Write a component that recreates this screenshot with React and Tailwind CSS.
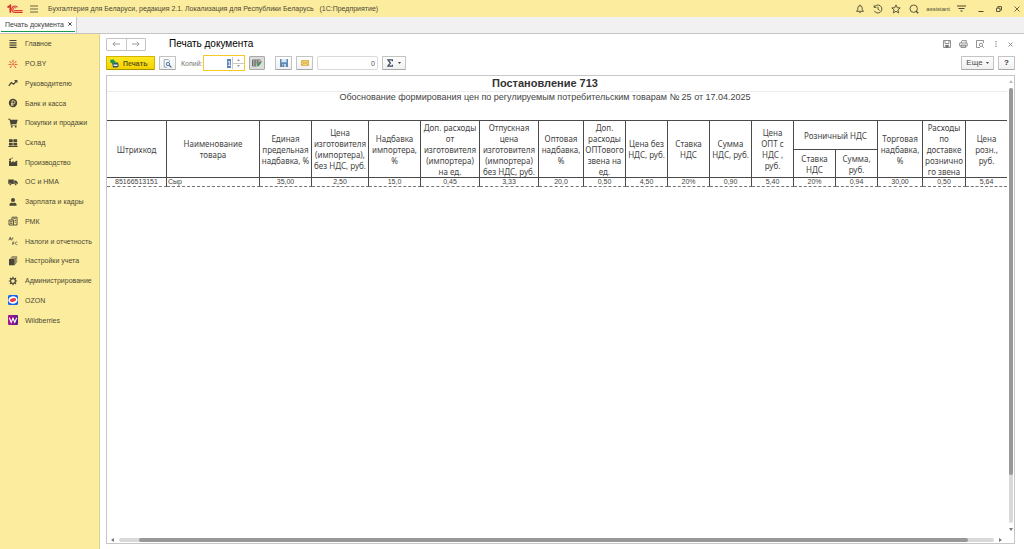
import { useState } from "react";

const GlyphHome = () => (
  <svg viewBox="0 0 10 10" className="size-[10px]" stroke="#4a4637" strokeWidth="1.2">
    <path d="M1.500 1.500h7M1.500 3.800h7M1.500 6.100h7M1.500 8.400h7" />
  </svg>
);

const GlyphPoBy = () => (
  <svg viewBox="0 0 10 10" className="size-[10px]" stroke="#e8502f" fill="none">
    <path d="M5 3.4V.8M3.6 4.2 1.6 2M6.4 4.2 8.4 2M3.3 5.4H.6M6.7 5.4h2.7M3.8 6.5 2 9M6.2 6.5 8 9" />
    <circle cx="5" cy="5.2" r=".9" fill="#e8502f" stroke="none" />
  </svg>
);

const GlyphTrend = () => (
  <svg viewBox="0 0 10 10" className="size-[10px]" stroke="#4a4637" fill="none" strokeWidth="1.3">
    <path d="M.8 7.8 3.3 4.6 5.6 6.2 8.6 2.8" />
    <path d="M6 2h3.4v3.2z" fill="#4a4637" stroke="none" />
  </svg>
);

const GlyphCoin = () => (
  <svg viewBox="0 0 10 10" className="size-[10px]" fill="none">
    <circle cx="5" cy="5" r="4.2" fill="#4a4637" />
    <path d="M4 8V2.8h1.6a1.4 1.4 0 0 1 0 2.9H3M3 7h2.6" stroke="#fbec9e" strokeWidth=".8" />
  </svg>
);

const GlyphCart = () => (
  <svg viewBox="0 0 10 10" className="size-[10px]" fill="#4a4637">
    <path d="M.3.8h1.8l.4 1h7.2L8.5 6H3.6l.1.7h5v.9H2.8L1.6 1.7H.3z" />
    <circle cx="3.8" cy="8.7" r=".9" />
    <circle cx="7.7" cy="8.7" r=".9" />
  </svg>
);

const GlyphStock = () => (
  <svg viewBox="0 0 10 10" className="size-[10px]" fill="#4a4637">
    <path d="M1 1.2h3.7v3H1zM5.4 1.2h3.7v3H5.4zM1 4.9h3.7v2.6H1zM5.4 4.9h3.7v2.6H5.4zM.4 8h9.2v.9H.4z" />
  </svg>
);

const GlyphFactory = () => (
  <svg viewBox="0 0 10 10" className="size-[10px]" fill="#4a4637">
    <path d="M1 9V3.600h2V5.600L5.600 4v1.600l3.600-2V9z" />
    <path d="M1.100 3V2h1.800v1zM1.600 1.500C2.200.5 3 1.400 3.800.7h1.400c-.5 1-1.200.9-2 .9z" />
  </svg>
);

const GlyphTruck = () => (
  <svg viewBox="0 0 10 10" className="size-[10px]" fill="#4a4637">
    <path d="M.3 2.5h5.5v4.6H.3zM6.2 3.5H8l1.7 1.8v1.8H6.2z" />
    <circle cx="2.3" cy="7.3" r="1.1" stroke="#fbec9e" strokeWidth=".4" />
    <circle cx="7.7" cy="7.3" r="1.1" stroke="#fbec9e" strokeWidth=".4" />
  </svg>
);

const GlyphPerson = () => (
  <svg viewBox="0 0 10 10" className="size-[10px]" fill="#4a4637">
    <circle cx="5" cy="3" r="2" />
    <path d="M1.500 8.800V7.300c0-1 1.300-1.500 2.500-1.800L5 6.400l1-.9c1.200.3 2.500.8 2.500 1.800v1.500z" />
  </svg>
);

const GlyphRmk = () => (
  <svg viewBox="0 0 10 10" className="size-[10px]" stroke="#4a4637" fill="none" strokeWidth=".9">
    <path d="M1 4h4.500v5H1zM4 4V1.200h5V9H5.500" />
    <path d="M2 5.700h2.500M2 7.300h2.500M6.700 4.500h1.200M6.700 6.200h1.200M5.300 2.700h2.500" />
  </svg>
);

const GlyphTax = () => (
  <svg viewBox="0 0 10 10" className="size-[10px]" stroke="#6b6550" fill="none" strokeWidth=".9">
    <path d="M.8 4.300 2.300 1l.9 3.300M1.400 3.200h1.700M4 4.300V2h1.500M9.300 6.200a1.300 1.300 0 1 0 0 2.200M4.800 9V6h1.500M4.800 7.500h1.300" />
  </svg>
);

const GlyphSettings = () => (
  <svg viewBox="0 0 10 10" className="size-[10px]" fill="#4a4637">
    <path d="M1 3h5.700v6.300H1z" />
    <path d="M2 2.400h5.300v6l.6-.5V1.700H2.600zM3.300 1.200h5.200v6l.6-.5V.6H3.800z" />
  </svg>
);

const GlyphGear = () => (
  <svg viewBox="0 0 10 10" className="size-[10px]" stroke="#4a4637" fill="none">
    <circle cx="5" cy="5" r="2.400" strokeWidth="1.200" />
    <path
      d="M5 .8v1.500M5 7.700v1.500M.8 5h1.500M7.700 5h1.500M2 2l1.100 1.100M6.900 6.900 8 8M8 2 6.900 3.100M3.100 6.900 2 8"
      strokeWidth="1.200"
    />
  </svg>
);

const GlyphOzon = () => (
  <svg viewBox="0 0 10 10" className="size-[10px]">
    <rect width="10" height="10" rx="1.500" fill="#1663f0" />
    <ellipse cx="5" cy="5" rx="4.600" ry="3.700" fill="#fff" transform="rotate(-8 5 5)" />
    <ellipse cx="5" cy="5" rx="3.100" ry="1.900" fill="#ee3a43" transform="rotate(-12 5 5)" />
  </svg>
);

const GlyphWb = () => (
  <svg viewBox="0 0 10 10" className="size-[10px]">
    <defs>
      <linearGradient id="wb" x1="0" x2="1">
        <stop offset="0" stopColor="#b01595" />
        <stop offset="1" stopColor="#5a1a8c" />
      </linearGradient>
    </defs>
    <rect width="10" height="10" rx="1" fill="url(#wb)" />
    <path d="M1.300 2.800 3.200 7.400 5 3.200 6.800 7.400 8.700 2.800" stroke="#fff" fill="none" strokeWidth="1.100" />
  </svg>
);

const sections = [
  { name: "Главное", Icon: GlyphHome },
  { name: "PO.BY", Icon: GlyphPoBy },
  { name: "Руководителю", Icon: GlyphTrend },
  { name: "Банк и касса", Icon: GlyphCoin },
  { name: "Покупки и продажи", Icon: GlyphCart },
  { name: "Склад", Icon: GlyphStock },
  { name: "Производство", Icon: GlyphFactory },
  { name: "ОС и НМА", Icon: GlyphTruck },
  { name: "Зарплата и кадры", Icon: GlyphPerson },
  { name: "РМК", Icon: GlyphRmk },
  { name: "Налоги и отчетность", Icon: GlyphTax },
  { name: "Настройки учета", Icon: GlyphSettings },
  { name: "Администрирование", Icon: GlyphGear },
  { name: "OZON", Icon: GlyphOzon },
  { name: "Wildberries", Icon: GlyphWb },
];

const columns = [
  { lines: ["Штрихкод"], width: 60, value: "85166513151" },
  { lines: ["Наименование", "товара"], width: 93, value: "Сыр" },
  { lines: ["Единая", "предельная", "надбавка, %"], width: 52, value: "35,00" },
  { lines: ["Цена", "изготовителя", "(импортера),", "без НДС, руб."], width: 57, value: "2,50" },
  { lines: ["Надбавка", "импортера,", "%"], width: 52, value: "15,0" },
  { lines: ["Доп. расходы", "от", "изготовителя", "(импортера)", "на ед."], width: 59, value: "0,45" },
  { lines: ["Отпускная", "цена", "изготовителя", "(импортера)", "без НДС, руб."], width: 59, value: "3,33" },
  { lines: ["Оптовая", "надбавка,", "%"], width: 45, value: "20,0" },
  { lines: ["Доп.", "расходы", "ОПТового", "звена на", "ед."], width: 42, value: "0,50" },
  { lines: ["Цена без", "НДС, руб."], width: 42, value: "4,50" },
  { lines: ["Ставка", "НДС"], width: 42, value: "20%" },
  { lines: ["Сумма", "НДС, руб."], width: 42, value: "0,90" },
  { lines: ["Цена", "ОПТ с", "НДС ,", "руб."], width: 42, value: "5,40" },
  { lines: ["Ставка", "НДС"], width: 42, value: "20%", group: "Розничный НДС" },
  { lines: ["Сумма,", "руб."], width: 42, value: "0,94", group: "Розничный НДС" },
  { lines: ["Торговая", "надбавка,", "%"], width: 45, value: "30,00" },
  { lines: ["Расходы", "по", "доставке", "рознично", "го звена"], width: 43, value: "0,50" },
  { lines: ["Цена", "розн.,", "руб."], width: 41, value: "5,64" },
];

const toolButton =
  "flex h-[14px] items-center justify-center rounded-[1px] border border-[#c3c3c3] border-b-[#a8a8a8] bg-linear-to-b from-white to-[#f0f0f0]";

function Lines({ lines }) {
  return lines.map((line) => (
    <span key={line} className="block whitespace-nowrap">
      {line}
    </span>
  ));
}

function TitleBar() {
  return (
    <header className="flex h-[17px] shrink-0 items-center bg-[#fbec9e] pl-[7px] pr-1 text-[#4d4833]">
      <svg viewBox="0 0 17 10" className="h-[10px] w-[17px]" fill="none" stroke="#d9312b">
        <path d="M.5 3.500 3.300 1.500v7.300" strokeWidth="1.700" />
        <path d="M10.500 3.400A3.200 3.200 0 1 0 7.800 8.400H15.600" strokeWidth="1.200" />
        <path d="M9 4.300a1.500 1.500 0 1 0-1.200 2.300h7.800" strokeWidth="1" />
      </svg>
      <button aria-label="Меню" className="ml-[6px]">
        <svg viewBox="0 0 8 8" className="size-2" stroke="#6b6446">
          <path d="M0 1h8M0 4h8M0 7h8" />
        </svg>
      </button>
      <div className="ml-[10px] flex-1 whitespace-pre text-[7px]">
        {"Бухгалтерия для Беларуси, редакция 2.1. Локализация для Республики Беларусь   (1С:Предприятие)"}
      </div>
      <div className="flex items-center gap-2">
        <button aria-label="Уведомления">
          <svg viewBox="0 0 10 10" className="size-[10px]" fill="none" stroke="#4d4833" strokeWidth=".9">
            <path d="M1.500 7.300h7L7.200 5.700V4A2.200 2.200 0 0 0 2.800 4v1.700zM5 .6v1.200M4.200 8.300a.9.9 0 0 0 1.600 0" />
          </svg>
        </button>
        <button aria-label="История">
          <svg viewBox="0 0 10 10" className="size-[10px]" fill="none" stroke="#4d4833" strokeWidth=".9">
            <path d="M1.300 3.200A4 4 0 1 1 1.300 6.800M1.200 1.200v2.200h2.200M5 2.700v2.500l1.700 1.300" />
          </svg>
        </button>
        <button aria-label="Избранное">
          <svg viewBox="0 0 10 10" className="size-[10px]" fill="none" stroke="#4d4833" strokeWidth=".9">
            <path d="m5 .9 1.200 2.800 3 .2-2.300 2 .8 3L5 7.300 2.300 8.900l.8-3-2.300-2 3-.2z" />
          </svg>
        </button>
        <button aria-label="Поиск">
          <svg viewBox="0 0 10 10" className="size-[10px]" fill="none" stroke="#4d4833" strokeWidth=".9">
            <circle cx="4.700" cy="4.700" r="3.700" />
            <path d="m6.900 6.900 2.300 2.300" strokeWidth="1.300" />
          </svg>
        </button>
        <span className="-mx-px text-[6px]">assistant</span>
        <button aria-label="Сервис">
          <svg viewBox="0 0 9 8" className="h-2 w-[9px]" stroke="#4d4833" fill="#4d4833">
            <path d="M0 1h9M1.500 3.500h6" />
            <path d="M3 5.500h3L4.500 7z" stroke="none" />
          </svg>
        </button>
      </div>
      <div className="ml-3 flex items-center gap-3">
        <button aria-label="Свернуть">
          <svg viewBox="0 0 6 6" className="size-[6px]" stroke="#4d4833">
            <path d="M.5 5.500h5" />
          </svg>
        </button>
        <button aria-label="Развернуть">
          <svg viewBox="0 0 6 6" className="size-[6px]" stroke="#4d4833" fill="none" strokeWidth=".9">
            <path d="M.5 2.200h3.500v3.300H.5zM1.800 2V.6h3.700v3.500H4.200" />
          </svg>
        </button>
        <button aria-label="Закрыть">
          <svg viewBox="0 0 6 6" className="size-[6px]" stroke="#4d4833" strokeWidth=".8">
            <path d="m.5.5 5 5M5.500.5l-5 5" />
          </svg>
        </button>
      </div>
    </header>
  );
}

function OpenTabs() {
  return (
    <div className="flex h-[17px] shrink-0 border-b border-[#c4c4c4] bg-[#f1f1f1]">
      <div className="flex h-4 items-center border-r border-[#c4c4c4] bg-white px-[1px]">
        <div className="flex h-[15px] items-center gap-1 self-start border-b border-[#169a4c] pr-[3px] pl-[4px] text-[7px] text-[#404040]">
          <a href="#document">Печать документа</a>
          <button aria-label="Закрыть вкладку">
            <svg viewBox="0 0 4 4" className="size-1" stroke="#333" strokeWidth=".9">
              <path d="m.3.3 3.400 3.400M3.700.3.300 3.700" />
            </svg>
          </button>
        </div>
      </div>
    </div>
  );
}

function Sidebar() {
  return (
    <aside className="w-[100px] shrink-0 border-r border-[#ddd08c] bg-[#fbec9e]">
      <nav className="grid h-[296px] auto-rows-fr">
        {sections.map(({ name, Icon }) => (
          <a
            key={name}
            href="#section"
            className="flex items-center gap-[7px] pl-2 text-[7px] whitespace-nowrap text-[#4d4833]"
          >
            <Icon />
            {name}
          </a>
        ))}
      </nav>
    </aside>
  );
}

function PageHeader() {
  return (
    <div className="flex h-5 items-center">
      <div className="flex h-[13px] w-10 divide-x divide-[#c9c9c9] rounded-[1px] border border-[#c3c3c3]">
        <button aria-label="Назад" className="flex flex-1 items-center justify-center">
          <svg viewBox="0 0 8 6" className="h-[6px] w-2" fill="none" stroke="#9b9b9b">
            <path d="M8 3H1M3.200.7.900 3l2.300 2.300" />
          </svg>
        </button>
        <button aria-label="Вперед" className="flex flex-1 items-center justify-center">
          <svg viewBox="0 0 8 6" className="h-[6px] w-2" fill="none" stroke="#9b9b9b">
            <path d="M0 3h7M4.800.7 7.100 3 4.800 5.300" />
          </svg>
        </button>
      </div>
      <h1 className="ml-[23px] flex-1 text-[10px] text-black">Печать документа</h1>
      <div className="flex items-center gap-2 pr-[2px] text-[#777]">
        <button aria-label="Сохранить">
          <svg viewBox="0 0 8 8" className="size-2" fill="none" stroke="#777" strokeWidth=".8">
            <path d="M.5.500h7v7h-7zM2 .5v3h4v-3M2.300 7.500V5.300h3.400v2.200" />
            <path d="M3 5.500h2v2H3z" fill="#777" />
          </svg>
        </button>
        <button aria-label="Печать">
          <svg viewBox="0 0 9 8" className="h-2 w-[9px]" fill="none" stroke="#777" strokeWidth=".8">
            <path d="M2 3 3 .6h4.500L6.800 3M.6 3h7.600v3H.6zM2 5h4.700v2.500H2z" />
          </svg>
        </button>
        <button aria-label="Просмотр">
          <svg viewBox="0 0 8 8" className="size-2" fill="none" stroke="#777" strokeWidth=".8">
            <path d="M7.500 3V.5h-7v7H4M6.300 6.300l1.500 1.500" />
            <circle cx="5" cy="4.800" r="1.700" />
          </svg>
        </button>
        <button aria-label="Еще действия" className="px-[3px]">
          <svg viewBox="0 0 2 8" className="h-2 w-[2px]" fill="#666">
            <path d="M.5 1h1v1.200h-1zM.5 3.400h1v1.200h-1zM.5 5.800h1V7h-1z" />
          </svg>
        </button>
        <button aria-label="Закрыть">
          <svg viewBox="0 0 5 5" className="size-[5px]" stroke="#777" strokeWidth=".8">
            <path d="m.5.5 4 4M4.500.5l-4 4" />
          </svg>
        </button>
      </div>
    </div>
  );
}

function Toolbar({ copies, setCopies }) {
  return (
    <div className="flex h-[18px] items-center text-[8px] text-[#4a4a4a]">
      <button className="flex h-[14px] w-[49px] items-center gap-1 rounded-[1px] border border-[#d2b400] border-b-[#a89000] bg-linear-to-b from-[#ffe822] to-[#f2d200] pl-[3px] text-[7px] font-bold text-[#6b5c10]">
        <svg viewBox="0 0 9 9" className="size-[9px]">
          <path d="M2 3.500h6l.8 3.500-1.500 1.500H3z" fill="#35546e" />
          <path d="M3.500 5.500h4V7h-4z" fill="#dceaf4" />
          <path d="M.3.800 4.200.6v1.300l1.700.7-1.700 1.300-1 1.200L.3 3.500z" fill="#179a50" />
        </svg>
        Печать
      </button>
      <button aria-label="Предварительный просмотр" className={`ml-1 w-[17px] ${toolButton}`}>
        <svg viewBox="0 0 9 9" className="size-[9px]" fill="none" stroke="#8795a3" strokeWidth=".8">
          <path d="M6.500 3V1.800L5.300.6H1.200v7.600H4" />
          <circle cx="5" cy="5" r="1.700" stroke="#2f5e91" fill="#d8e8f6" />
          <path d="m6.300 6.300 2 2" stroke="#2f5e91" strokeWidth="1.200" />
        </svg>
      </button>
      <label htmlFor="copies" className="ml-[5px] w-[22px] text-[7px] whitespace-nowrap text-[#777]">
        Копий:
      </label>
      <div className="flex h-4 w-[42px] items-center border border-[#f5c928] bg-white">
        <input
          id="copies"
          value={copies}
          onChange={(e) => setCopies(Number(e.target.value) || 0)}
          className="ml-auto h-[9px] w-1 bg-[#5c84b4] text-right text-[8px] text-white outline-none"
        />
        <div className="ml-px flex h-3 w-3 flex-col divide-y divide-[#c9c9c9] border-l border-[#c9c9c9]">
          <button aria-label="Больше" className="flex flex-1 items-center justify-center" onClick={() => setCopies(copies + 1)}>
            <svg viewBox="0 0 3 2" className="h-[2px] w-[3px]" fill="#999">
              <path d="M0 2h3L1.500 0z" />
            </svg>
          </button>
          <button aria-label="Меньше" className="flex flex-1 items-center justify-center" onClick={() => setCopies(Math.max(1, copies - 1))}>
            <svg viewBox="0 0 3 2" className="h-[2px] w-[3px]" fill="#999">
              <path d="M0 0h3L1.500 2z" />
            </svg>
          </button>
        </div>
      </div>
      <button
        aria-label="Редактирование"
        className="ml-1 flex h-[14px] w-[16px] items-center justify-center rounded-[1px] border border-[#a9a9a9] bg-[#dcdcdc]"
      >
        <svg viewBox="0 0 10 8" className="h-2 w-[10px]" fill="none" stroke="#555" strokeWidth=".8">
          <path d="M8.500 1H.5v6h4M.5 3h7M.5 5h5M3 1v6M5.700 1v4" />
          <path d="M5 7.500 5.500 5.600 8 2.500l1.300 1L6.800 7z" fill="#23924a" stroke="none" />
          <path d="m8.200 2.200.6-.7 1.200.9-.6.8z" fill="#c2513e" stroke="none" />
        </svg>
      </button>
      <button aria-label="Сохранить файл" className={`ml-[10px] w-[17px] ${toolButton}`}>
        <svg viewBox="0 0 8 8" className="size-2">
          <path d="M0 0h8v8H0z" fill="#5d89b8" />
          <path d="M1.500 0h5v3.300h-5z" fill="#dbe8f4" />
          <path d="M2 5h4v3H2z" fill="#bcd0e4" />
          <path d="M2.600 5.500h1.200V8H2.600z" fill="#3c648f" />
        </svg>
      </button>
      <button aria-label="Отправить по почте" className={`ml-1 w-[17px] ${toolButton}`}>
        <svg viewBox="0 0 8 6" className="h-[6px] w-2">
          <rect x=".4" y=".4" width="7.200" height="5.200" rx=".5" fill="#f5d472" stroke="#d3a63a" strokeWidth=".8" />
          <path d="m.6 5.300 2.600-2.600M7.400 5.300 4.800 2.700M.6.800 4 3.500 7.400.8" fill="none" stroke="#c99b2e" strokeWidth=".6" />
        </svg>
      </button>
      <input
        aria-label="Сумма выделенных ячеек"
        readOnly
        value="0"
        className="ml-[4px] h-[14px] w-[61px] rounded-[2px] border border-[#dadada] px-[2px] text-right text-[7px] text-[#555]"
      />
      <button aria-label="Вычислить" className={`ml-[4px] w-[24px] gap-[5px] ${toolButton}`}>
        <svg viewBox="0 0 6 8" className="h-2 w-[6px]" fill="none" stroke="#3d4c60" strokeWidth="1.300">
          <path d="M5.500 2.200V.8H.9L3.400 4 .9 7.200h4.600V5.800" />
        </svg>
        <svg viewBox="0 0 3 2" className="h-[2px] w-[3px]" fill="#444">
          <path d="M0 0h3L1.500 2z" />
        </svg>
      </button>
      <button className={`ml-auto w-[33px] gap-[3px] ${toolButton}`}>
        Еще
        <svg viewBox="0 0 3 2" className="h-[2px] w-[3px]" fill="#444">
          <path d="M0 0h3L1.500 2z" />
        </svg>
      </button>
      <button className={`ml-1 w-[17px] font-bold text-[#333] ${toolButton}`}>?</button>
    </div>
  );
}

function PriceTable() {
  const cell = "border-r border-[#4a4a4a] p-0 last:border-r-0";
  return (
    <table className="w-full table-fixed border-separate border-spacing-0 text-center">
      <colgroup>
        {columns.map((c, i) => (
          <col key={i} style={{ width: c.width }} />
        ))}
      </colgroup>
      <thead className="font-['Noto_Sans',sans-serif] text-[8px] leading-[11px] text-[#444]">
        <tr className="h-[30px]">
          {columns.map((c, i) => {
            if (!c.group) {
              return (
                <th key={i} rowSpan={2} className={`border-y font-normal ${cell}`}>
                  <div className="flex flex-col items-center">
                    <Lines lines={c.lines} />
                  </div>
                </th>
              );
            }
            // one heading spans the whole group
            return columns[i - 1].group ? null : (
              <th key={i} colSpan={2} className={`border-y font-normal ${cell}`}>
                {c.group}
              </th>
            );
          })}
        </tr>
        <tr className="h-[28px]">
          {columns
            .filter((c) => c.group)
            .map((c) => (
              <th key={c.value} className="border-r border-b border-[#4a4a4a] p-0 font-normal">
                <Lines lines={c.lines} />
              </th>
            ))}
        </tr>
      </thead>
      <tbody className="text-[7px] leading-[8px] text-[#444]">
        <tr>
          {columns.map((c, i) => (
            <td
              key={i}
              className={`border-r border-b border-[#4a4a4a] border-b-[#777] p-0 [border-bottom-style:dashed] last:border-r-0 ${c.value === "Сыр" ? "pl-px text-left" : ""}`}
            >
              {c.value}
            </td>
          ))}
        </tr>
      </tbody>
    </table>
  );
}

function Sheet() {
  return (
    <section className="flex min-h-0 flex-1 flex-col border border-[#c6c6c6] bg-white">
      <div className="flex min-h-0 flex-1">
        <div className="min-w-0 flex-1 overflow-hidden text-center">
          <h2 className="h-4 border-b border-[#ececec] pr-6 text-[11px] leading-[15px] font-bold text-[#333]">
            Постановление 713
          </h2>
          <p className="h-[28px] pr-6 text-[9px] leading-[10px] text-[#444]">
            Обоснование формирования цен по регулируемым потребительским товарам № 25 от 17.04.2025
          </p>
          <PriceTable />
        </div>
        <div className="flex w-[7px] flex-col items-center pt-1 pb-[5px]">
          <svg viewBox="0 0 4 3" className="h-[3px] w-1" fill="#bbb">
            <path d="M0 3h4L2 0z" />
          </svg>
          <div className="mt-[5px] mb-[5px] w-1 flex-1 rounded-full bg-[#d9d9d9]">
            <div className="h-[89%] rounded-full bg-[#989898]" />
          </div>
          <svg viewBox="0 0 4 3" className="h-[3px] w-1" fill="#777">
            <path d="M0 0h4L2 3z" />
          </svg>
        </div>
      </div>
      <div className="flex h-[7px] items-center pr-3 pl-1">
        <svg viewBox="0 0 3 4" className="h-1 w-[3px]" fill="#777">
          <path d="M3 0v4L0 2z" />
        </svg>
        <div className="mx-[5px] h-1 flex-1 rounded-full bg-[#d9d9d9] pl-5">
          <div className="h-1 w-[97%] rounded-full bg-[#989898]" />
        </div>
        <svg viewBox="0 0 3 4" className="h-1 w-[3px]" fill="#777">
          <path d="M0 0v4l3-2z" />
        </svg>
      </div>
    </section>
  );
}

export default function App() {
  const [copies, setCopies] = useState(1);

  return (
    <div className="flex h-screen flex-col bg-white font-['Liberation_Sans',Arial,sans-serif] leading-none">
      <TitleBar />
      <OpenTabs />
      <div className="flex min-h-0 flex-1">
        <Sidebar />
        <main className="flex min-w-0 flex-1 flex-col pr-[9px] pb-[5px] pl-[6px]">
          <PageHeader />
          <Toolbar copies={copies} setCopies={setCopies} />
          <div className="h-[3px] shrink-0" />
          <Sheet />
        </main>
      </div>
    </div>
  );
}
